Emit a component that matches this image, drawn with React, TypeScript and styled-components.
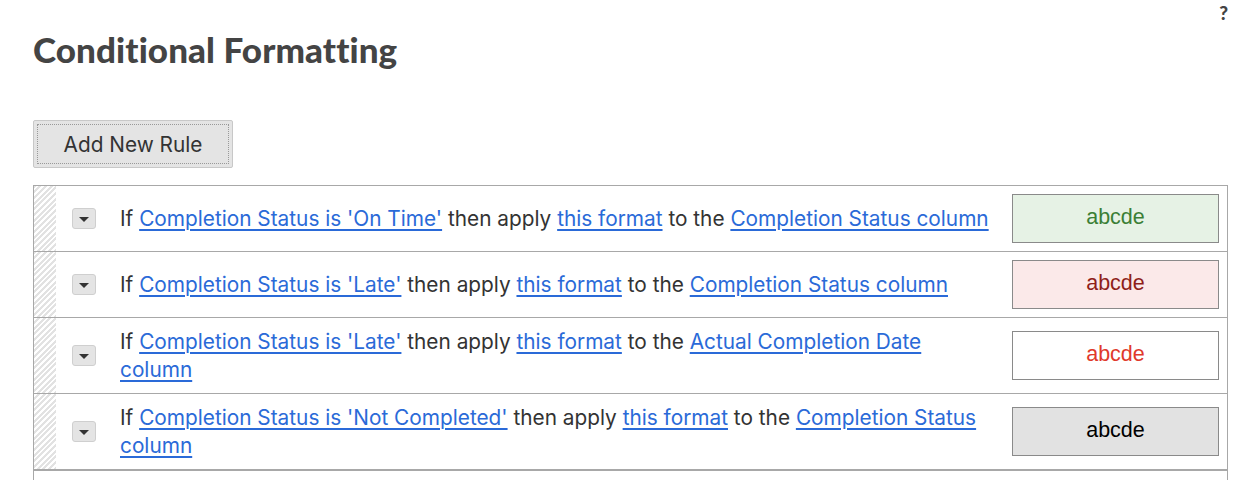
import React from "react";
import styled, { createGlobalStyle } from "styled-components";

const GlobalStyle = createGlobalStyle`
  html, body {
    margin: 0;
    padding: 0;
    background: #ffffff;
  }
  body {
    font-family: Inter, "Noto Sans", sans-serif;
    color: #333333;
  }
`;

const Page = styled.div`
  width: 1244px;
  height: 480px;
  overflow: hidden;
  box-sizing: border-box;
  padding: 0 16px 0 33px;
  position: relative;
`;

const HelpMark = styled.a`
  position: absolute;
  top: 2px;
  right: 16px;
  font-family: Lato, "Open Sans", sans-serif;
  font-weight: 900;
  font-size: 19px;
  line-height: 22px;
  color: #444;
  text-decoration: none;
`;

const Heading = styled.h1`
  margin: 0;
  padding-top: 29px;
  font-family: Lato, "Open Sans", sans-serif;
  font-weight: 900;
  font-size: 35px;
  line-height: 40px;
  color: #444444;
  letter-spacing: 0.1px;
`;

const Toolbar = styled.div`
  display: flex;
  margin-top: 51px;
  margin-bottom: 17px;
`;

const AddButton = styled.button`
  position: relative;
  width: 200px;
  height: 48px;
  background: #e4e4e4;
  border: 1px solid #c8c8c8;
  border-radius: 2px;
  font-family: Inter, "Noto Sans", sans-serif;
  font-size: 20.8px;
  color: #333333;
  padding: 0;
  cursor: pointer;
  &::after {
    content: "";
    position: absolute;
    inset: 3px;
    border: 1px dotted #999;
  }
`;

const RuleTable = styled.div`
  border: 1px solid #a8a8a8;
  border-bottom: 2px solid #a8a8a8;
  width: 1195px;
  box-sizing: border-box;
`;

const Row = styled.div`
  display: grid;
  grid-template-columns: 22px 64px 1fr 215px;
  align-items: stretch;
  & + & {
    border-top: 1px solid #a8a8a8;
  }
`;

const Stripe = styled.div`
  background: repeating-linear-gradient(
    -45deg,
    #e2e2e2 0px,
    #e2e2e2 2px,
    #ffffff 2px,
    #ffffff 4px
  );
`;

const MenuCell = styled.div`
  display: flex;
  align-items: center;
  padding-left: 16px;
`;

const MenuButton = styled.button`
  width: 24px;
  height: 21px;
  padding: 0;
  background: #e4e4e4;
  border: 1px solid #cfcfcf;
  border-radius: 3px;
  display: flex;
  align-items: center;
  justify-content: center;
`;

const Triangle = styled.span`
  width: 0;
  height: 0;
  border-left: 5px solid transparent;
  border-right: 5px solid transparent;
  border-top: 5px solid #333;
  margin-top: 1px;
`;

const RuleText = styled.div`
  display: flex;
  align-items: center;
  padding: 9.5px 16px 9.5px 0;
  font-size: 20.8px;
  line-height: 28px;
  color: #333333;
`;

const TextInner = styled.div``;

const Link = styled.a`
  color: #2a6ad8;
  text-decoration: underline;
  text-underline-offset: 3px;
  text-decoration-thickness: 2px;
  cursor: pointer;
`;

const FormatCell = styled.div`
  display: flex;
  align-items: center;
  padding: 8px 8px 8px 0;
`;

const Preview = styled.div<{ $bg: string; $fg: string }>`
  width: 207px;
  height: 49px;
  box-sizing: border-box;
  border: 1px solid #8a8a8a;
  background: ${(p) => p.$bg};
  color: ${(p) => p.$fg};
  font-family: "Liberation Sans", Arial, sans-serif;
  font-size: 21.5px;
  display: flex;
  align-items: center;
  justify-content: center;
  padding-bottom: 2px;
`;

const TailRow = styled.div`
  height: 20px;
  border-left: 1px solid #a8a8a8;
  border-right: 1px solid #a8a8a8;
  width: 1195px;
  box-sizing: border-box;
`;

type Rule = {
  condition: string;
  column: string;
  bg: string;
  fg: string;
};

const rules: Rule[] = [
  { condition: "Completion Status is 'On Time'", column: "Completion Status column", bg: "#e6f2e5", fg: "#3b7f35" },
  { condition: "Completion Status is 'Late'", column: "Completion Status column", bg: "#fbe9e9", fg: "#8f1f1a" },
  { condition: "Completion Status is 'Late'", column: "Actual Completion Date column", bg: "#ffffff", fg: "#e0392b" },
  { condition: "Completion Status is 'Not Completed'", column: "Completion Status column", bg: "#e2e2e2", fg: "#000000" },
];

export default function App() {
  return (
    <>
      <GlobalStyle />
      <Page>
        <HelpMark>?</HelpMark>
        <Heading>Conditional Formatting</Heading>
        <Toolbar>
          <AddButton>Add New Rule</AddButton>
        </Toolbar>
        <RuleTable>
          {rules.map((r, i) => (
            <Row key={i}>
              <Stripe />
              <MenuCell>
                <MenuButton>
                  <Triangle />
                </MenuButton>
              </MenuCell>
              <RuleText>
                <TextInner>
                  If <Link>{r.condition}</Link> then apply <Link>this format</Link> to the{" "}
                  <Link>{r.column}</Link>
                </TextInner>
              </RuleText>
              <FormatCell>
                <Preview $bg={r.bg} $fg={r.fg}>abcde</Preview>
              </FormatCell>
            </Row>
          ))}
        </RuleTable>
        <TailRow />
      </Page>
    </>
  );
}
